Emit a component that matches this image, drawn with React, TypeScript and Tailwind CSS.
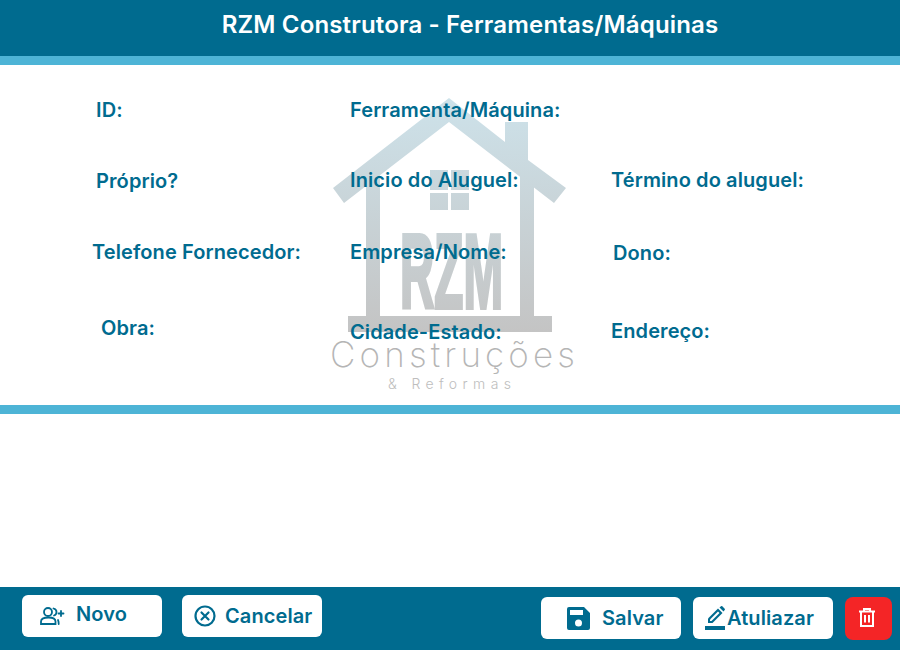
import React from "react";

const inter = "font-['Inter',sans-serif]";
const label = "text-[20px] leading-6 font-semibold tracking-[0.1px] text-[#006b8f] whitespace-nowrap";

function Logo() {
  return (
    <svg className="absolute left-[320px] top-[90px] pointer-events-none" width="270" height="310" viewBox="320 90 270 310">
      <defs>
        <linearGradient id="g" gradientUnits="userSpaceOnUse" x1="0" y1="98" x2="0" y2="332">
          <stop offset="0" stopColor="#cde2ea" />
          <stop offset="1" stopColor="#c4c4c4" />
        </linearGradient>
      </defs>
      <g fill="url(#g)">
        <path d="M449 98 L505 142 V122 H528 V160 L566 188 L554 203 L449 122 L344 203 L333 188 Z" />
        <path d="M366 183 L380 172 V316 H520 V172 L534 183 V316 H552 V332 H348 V316 H366 Z" />
        <rect x="430" y="170" width="18" height="20" />
        <rect x="451" y="170" width="18" height="20" />
        <rect x="430" y="193" width="18" height="17" />
        <rect x="451" y="193" width="18" height="17" />
        <text x="400" y="308" stroke="url(#g)" strokeWidth="4" fontFamily="Liberation Sans" fontWeight="700" fontSize="105" textLength="103" lengthAdjust="spacingAndGlyphs">RZM</text>
      </g>
      <g opacity="0.98">
        <text x="330" y="366.5" fill="#b4b4b4" fontFamily="Inter" fontWeight="200" fontSize="35" textLength="245">Construções</text>
        <text x="388" y="389" fill="#bdbdbd" fontFamily="Inter" fontWeight="300" fontSize="14" textLength="123">&amp; Reformas</text>
      </g>
    </svg>
  );
}

function Btn({ children, className }: { children: React.ReactNode; className: string }) {
  return (
    <button className={`h-[42px] w-[140px] rounded-md bg-white flex items-center text-[20px] font-semibold tracking-[0.1px] text-[#006b8f] ${className}`}>
      {children}
    </button>
  );
}

export default function App() {
  return (
    <div className={`${inter} w-[900px] h-[650px] bg-white flex flex-col relative overflow-hidden`}>
      <header className="h-[56px] bg-[#006b8f] flex items-center justify-center text-white text-[24px] font-semibold tracking-[0.16px] pb-[6px] pl-[40px]">
        RZM Construtora - Ferramentas/Máquinas
      </header>
      <div className="h-[9px] bg-[#4db4d6]" />
      <main className="h-[340px] relative">
        <div className="absolute inset-0 -top-[65px]"><Logo /></div>
        <div className="relative flex flex-col">
          <div className="flex pt-[33px] h-[69px]">
            <span className={`${label} ml-[96px] w-[254px]`}>ID:</span>
            <span className={label}>Ferramenta/Máquina:</span>
          </div>
          <div className="flex pt-[34px] h-[71px]">
            <span className={`${label} ml-[96px] w-[254px] mt-[1px]`}>Próprio?</span>
            <span className={`${label} w-[261px]`}>Inicio do Aluguel:</span>
            <span className={label}>Término do aluguel:</span>
          </div>
          <div className="flex pt-[35px] h-[76px]">
            <span className={`${label} ml-[92px] w-[258px]`}>Telefone Fornecedor:</span>
            <span className={`${label} w-[263px]`}>Empresa/Nome:</span>
            <span className={`${label} mt-[1px]`}>Dono:</span>
          </div>
          <div className="flex pt-[35px]">
            <span className={`${label} ml-[101px] w-[249px]`}>Obra:</span>
            <span className={`${label} w-[261px] mt-[4px]`}>Cidade-Estado:</span>
            <span className={`${label} mt-[3px]`}>Endereço:</span>
          </div>
        </div>
      </main>
      <div className="h-[9px] bg-[#4db4d6]" />
      <div className="flex-1" />
      <footer className="h-[63px] bg-[#006b8f] flex">
        <div className="flex gap-5 ml-[22px] mt-[8px]">
          <Btn className="pl-[18px] gap-[11px] pb-[4px]">
            <svg className="mt-[4px]" width="25" height="20" viewBox="0 0 25 20" fill="none" stroke="#006b8f" strokeWidth="1.8" strokeLinecap="round">
              <circle cx="8" cy="6" r="4" />
              <path d="M1 18 V15.5 C1 13 4 11.5 8.5 11.5 C13 11.5 15.5 13 15.5 15.5 V18 Z" />
              <path d="M13.5 2.5 C15.5 3 16.5 4.5 16.5 6 C16.5 7.5 15.5 9 14 9.5" />
              <path d="M18 14 C18.5 15 18.7 16 18.7 18" />
              <path d="M21 5 V10 M18.5 7.5 H23.5" />
            </svg>
            Novo
          </Btn>
          <Btn className="pl-[12px] gap-[9px] pb-[1px]">
            <svg width="22" height="22" viewBox="0 0 22 22" fill="none" stroke="#006b8f" strokeWidth="2.2" strokeLinecap="round">
              <circle cx="11" cy="11" r="9.5" />
              <path d="M7.5 7.5 L14.5 14.5 M14.5 7.5 L7.5 14.5" />
            </svg>
            Cancelar
          </Btn>
        </div>
        <div className="flex gap-3 ml-auto mr-2 mt-[10px]">
          <Btn className="pl-[26px] gap-[12px]">
            <svg width="23" height="23" viewBox="0 0 23 23" fill="#006b8f">
              <path fillRule="evenodd" d="M2 0 H17 L23 6 V21 A2 2 0 0 1 21 23 H2 A2 2 0 0 1 0 21 V2 A2 2 0 0 1 2 0 Z M3 3 V8 H16 V3 Z M11.5 12.5 A3.5 3.5 0 1 0 11.5 19.5 A3.5 3.5 0 1 0 11.5 12.5 Z" />
            </svg>
            Salvar
          </Btn>
          <Btn className="pl-[12px] gap-0">
            <svg width="22" height="24" viewBox="0 0 22 24" fill="#006b8f">
              <path d="M0 20 H20 V24 H0 Z" />
              <path d="M3 12.5 L13 2.5 L17.5 7 L7.5 17 H3 Z" />
              <path fill="#fff" d="M5 13.5 V15 H6.5 L14.5 7 L13 5.5 Z" />
              <path d="M14.5 1.5 L16 0.3 A1 1 0 0 1 17.3 0.3 L19.7 2.7 A1 1 0 0 1 19.7 4 L18.5 5.5 Z" />
            </svg>
            Atuliazar
          </Btn>
          <button className="h-[43px] w-[47px] rounded-lg bg-[#f42526] flex items-center justify-center pr-[3px] pb-[3px]">
            <svg width="16" height="19" viewBox="0 0 16 19" fill="none" stroke="#fff" strokeWidth="2">
              <path d="M0 3.5 H16" />
              <path d="M5 3.5 V1 H11 V3.5" />
              <path d="M2 3.5 V18 H14 V3.5" />
              <path d="M6 7 V14.5 M10 7 V14.5" />
            </svg>
          </button>
        </div>
      </footer>
    </div>
  );
}
